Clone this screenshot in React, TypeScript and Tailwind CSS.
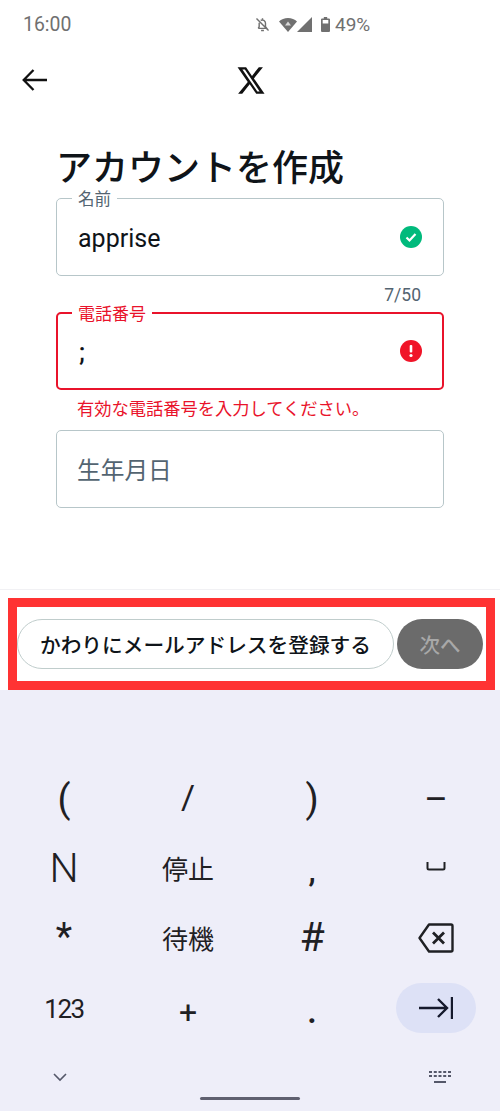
const jp = "font-['Noto_Sans_CJK_JP','Noto_Sans',sans-serif]";
const keys = ["(", "/", ")", "–", "N", "停止", ",", "space", "*", "待機", "#", "del", "123", "+", ".", "tab"];

const keyText: Record<string, string> = {
  "(": "text-[38px]",
  ")": "text-[38px]",
  "/": "text-[34px] mt-[-4px]",
  "–": "text-[36px] mt-[2px]",
  N: "text-[41px] font-light",
  ",": "text-[32px] font-medium mt-[6px]",
  "*": "text-[38px] mt-[-1px]",
  "#": "text-[41px]",
  "123": "text-[26px] tracking-[-1.500px] mt-[3px]",
  "+": "text-[32px] mt-[8px]",
  ".": "text-[36px] font-medium mt-[6px]",
};

function StatusIcons() {
  return (
    <div className="flex items-center text-[#707070]">
      <svg width="17" height="17" viewBox="0 0 24 24" fill="none" stroke="currentColor" strokeWidth="2" className="mr-[8px]">
        <path d="M6 17.5h12l-1.8-2.4V10a4.5 4.5 0 0 0-6.8-3.8M7.3 9.5v5.6L6 17.5M12 3v1.5M10 20.5h4M3.5 3.5l17 17" />
      </svg>
      <svg width="18" height="14" viewBox="0 0 18 14">
        <path d="M9 14 0 3.6C2.2 1.4 5.5 0 9 0s6.8 1.4 9 3.6z" fill="currentColor" />
        <path d="M9 3.5 6 7.5h6z" fill="#d8d8d8" />
      </svg>
      <svg width="15" height="15" viewBox="0 0 15 15" className="mr-[9px]">
        <path d="M15 0v15H0z" fill="currentColor" />
      </svg>
      <svg width="9" height="15" viewBox="0 0 8 15" className="mr-[5px]" preserveAspectRatio="none">
        <path d="M2.500 0h3v1.500H7a1 1 0 0 1 1 1V14a1 1 0 0 1-1 1H1a1 1 0 0 1-1-1V2.500a1 1 0 0 1 1-1h1.500z" fill="currentColor" />
        <path d="M1.500 3h5v3.500h-5z" fill="#fff" />
      </svg>
      <span className="font-['Roboto',sans-serif] text-[19px] leading-none">49%</span>
    </div>
  );
}

function KeyCell({ k }: { k: string }) {
  if (k === "space")
    return (
      <svg width="20" height="10" viewBox="0 0 20 10" fill="none" stroke="#1f2024" strokeWidth="2" className="mt-[-2px]">
        <path d="M1.500 0v6a1.500 1.500 0 0 0 1.500 1.500h14A1.500 1.500 0 0 0 18.500 6V0" />
      </svg>
    );
  if (k === "del")
    return (
      <svg width="36" height="30" viewBox="0 0 36 30" fill="none" stroke="#1f2024" strokeWidth="2.400">
        <path d="M11 1.500h22a1.500 1.500 0 0 1 1.500 1.500v24a1.500 1.500 0 0 1-1.500 1.500H11L1.500 15z" strokeLinejoin="round" />
        <path d="m15 9.500 11 11m0-11-11 11" strokeWidth="2.800" />
      </svg>
    );
  if (k === "tab")
    return (
      <div className="flex h-[50px] w-[80px] items-center justify-center rounded-full bg-[#dde1f6]">
        <svg width="34" height="22" viewBox="0 0 34 22" fill="none" stroke="#15192c" strokeWidth="2.400">
          <path d="M0 11h28M19 2l9 9-9 9M33 0v22" />
        </svg>
      </div>
    );
  if (k === "停止" || k === "待機")
    return <span className={`${jp} text-[26px] leading-none text-[#1f2024]`}>{k}</span>;
  return <span className={`font-['Roboto',sans-serif] leading-none text-[#1f2024] ${keyText[k]}`}>{k}</span>;
}

export default function App() {
  return (
    <div className="flex h-[1111px] w-[500px] flex-col overflow-hidden bg-white">
      <main className="h-[590px] shrink-0 border-b border-[#f1f1f4]">
        {/* status bar */}
        <div className="flex h-[48px] items-center pl-[23px] pt-[1px]">
          <span className="w-[48px] font-['Roboto',sans-serif] text-[19.400px] leading-none text-[#707070]">16:00</span>
          <div className="ml-[183px]">
            <StatusIcons />
          </div>
        </div>

        {/* header */}
        <div className="flex h-[64px] items-center pl-[22px]">
          <svg width="25" height="22" viewBox="0 0 25 22" fill="none" stroke="#111" strokeWidth="2.300">
            <path d="M25 11H2M11.500 1 1.700 11l9.800 10" />
          </svg>
          <svg width="30" height="29" viewBox="0 0 24 24" fill="#111" className="ml-[189px]" preserveAspectRatio="none">
            <path d="M18.244 1h3.308l-7.227 9.260 8.502 12.740H16.170l-5.214-7.817L4.990 23H1.680l7.730-9.835L1.254 1H8.080l4.713 7.231zm-1.161 20h1.833L7.084 2.826H5.117z" />
          </svg>
        </div>

        <div className="px-[56px]">
          <h1 className={`${jp} h-[78px] pt-[31px] text-[36px] leading-[44px] font-medium text-[#0f1419]`}>
            アカウントを作成
          </h1>

          {/* name */}
          <fieldset className="h-[86px] rounded-[5px] border border-[#b7c6c9] pl-[15px] pr-[21px]">
            <legend className={`${jp} px-[6px] text-[16.500px] leading-[16px] text-[#536471]`}>名前</legend>
            <div className="mt-[17px] flex items-center justify-between pl-[6px]">
              <span className="font-['Roboto',sans-serif] text-[25px] leading-[32px] text-[#0f1419]">apprise</span>
              <svg width="22" height="22" viewBox="0 0 22 22" className="mt-[-4px]">
                <circle cx="11" cy="11" r="11" fill="#00ba7c" />
                <path d="m6.500 11.500 3 3 6-6.500" fill="none" stroke="#fff" strokeWidth="2.200" />
              </svg>
            </div>
          </fieldset>
          <p className="mr-[23px] mt-[10px] h-[18px] text-right font-['Roboto',sans-serif] text-[17.500px] leading-[18px] text-[#536471]">7/50</p>

          {/* phone */}
          <fieldset className="h-[86px] rounded-[5px] border-2 border-[#e9132b] pl-[14px] pr-[20px]">
            <legend className={`${jp} px-[6px] text-[17px] leading-[18px] text-[#e9132b]`}>電話番号</legend>
            <div className="mt-[15px] flex items-center justify-between">
              <span className="pl-[7px] font-['Roboto',sans-serif] text-[25px] leading-[32px] font-medium text-[#0f1419]">;</span>
              <svg width="22" height="22" viewBox="0 0 22 22" className="mt-[-4px]">
                <circle cx="11" cy="11" r="11" fill="#f01428" />
                <rect x="9.700" y="5" width="2.600" height="7.500" rx="1" fill="#fff" />
                <circle cx="11" cy="15.500" r="1.600" fill="#fff" />
              </svg>
            </div>
          </fieldset>
          <p className={`${jp} ml-[21px] mt-[6px] h-[34px] text-[17.250px] leading-[24px] text-[#e9132b]`}>有効な電話番号を入力してください。</p>

          {/* birthday */}
          <div className="flex h-[78px] items-center rounded-[5px] border border-[#b7c6c9] pl-[20px]">
            <span className={`${jp} text-[23.700px] leading-[32px] text-[#536471]`}>生年月日</span>
          </div>
        </div>
      </main>

      {/* bottom buttons, boxed in red */}
      <div className="h-[100px] shrink-0 bg-white pl-[8px] pt-[8px]">
        <div className="flex h-[92px] w-[487px] items-center border-[9px] border-[#ff3333]">
          <button className={`${jp} h-[50px] w-[377px] rounded-full border border-[#c0cdcc] text-[20.700px] leading-none font-medium text-[#0f1419]`}>
            かわりにメールアドレスを登録する
          </button>
          <button className={`${jp} ml-[3px] h-[50px] w-[86px] rounded-full bg-[#6b6b6b] text-[20.500px] leading-none font-medium text-[#a8a8a8]`}>
            次へ
          </button>
        </div>
      </div>

      {/* keyboard */}
      <div className="flex flex-1 flex-col bg-[#eeeef9]">
        <div className="mt-[74px] grid grid-cols-[124px_124px_124px_124px] auto-rows-[69.600px] pl-[2px]">
          {keys.map((k) => (
            <div key={k} className="flex items-center justify-center">
              <KeyCell k={k} />
            </div>
          ))}
        </div>
        <div className="mt-[29px] flex items-center justify-between pl-[53px] pr-[49px]">
          <svg width="14" height="9" viewBox="0 0 14 9" fill="none" stroke="#55586a" strokeWidth="1.600">
            <path d="m1 1 6 6 6-6" />
          </svg>
          <svg width="22" height="12" viewBox="0 0 22 12" fill="#55586a">
            <path d="M0 0h3v2H0zM4.800 0h3v2h-3zM9.500 0h3v2h-3zM14.200 0h3v2h-3zM19 0h3v2h-3zM0 4h3v2H0zM4.800 4h3v2h-3zM9.500 4h3v2h-3zM14.200 4h3v2h-3zM19 4h3v2h-3zM5 10h12v2H5z" />
          </svg>
        </div>
        <div className="mx-auto mt-[14px] h-[3px] w-[100px] rounded-full bg-[#5f6070]" />
      </div>
    </div>
  );
}
